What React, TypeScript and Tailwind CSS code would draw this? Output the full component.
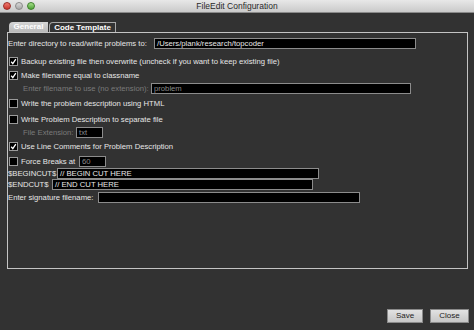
import React from 'react'

const font = { fontFamily: '"Liberation Sans", Arial, sans-serif' }

function CheckBox({ checked }: { checked: boolean }) {
  return (
    <span className="ml-[1px] flex h-[9px] w-[9px] shrink-0 items-center justify-center border border-[#9a9a9a] bg-black">
      {checked && (
        <svg width="7" height="7" viewBox="0 0 7 7" aria-hidden="true">
          <path d="M1.2 3.8 L2.8 5.6 L5.8 1.2" fill="none" stroke="#ffffff" strokeWidth="1.3" />
        </svg>
      )}
    </span>
  )
}

function Field({ value, width, dim }: { value: string; width: string; dim?: boolean }) {
  return (
    <div
      className={`flex h-[11px] shrink-0 items-center whitespace-nowrap border border-[#8c8c8c] bg-black pl-[2px] text-[7.7px] leading-none ${width} ${
        dim ? 'text-[#8a8a8a]' : 'text-[#e8e8e8]'
      }`}
    >
      {value}
    </div>
  )
}

export default function App() {
  return (
    <div className="flex h-[330px] w-[474px] flex-col overflow-hidden whitespace-nowrap bg-[#323232] text-[7.7px] text-[#e6e6e6]" style={font}>
      {/* title bar */}
      <div className="relative flex h-[13px] shrink-0 items-center justify-center border-b border-[#8a8a8a] bg-gradient-to-b from-[#e8e8e8] to-[#cacaca]">
        <div className="absolute left-[3px] top-[2px] flex gap-[4px]">
          <span className="h-[8px] w-[8px] rounded-full border border-[#9a2a24] bg-gradient-to-b from-[#f07a70] to-[#c8322a]" />
          <span className="h-[8px] w-[8px] rounded-full border border-[#8a8a8a] bg-gradient-to-b from-[#d8d8d8] to-[#a8a8a8]" />
          <span className="h-[8px] w-[8px] rounded-full border border-[#3c7f2a] bg-gradient-to-b from-[#a6e08a] to-[#4da234]" />
        </div>
        <span className="text-[8.5px] text-[#2a2a2a]">FileEdit Configuration</span>
      </div>

      {/* tabs */}
      <div className="ml-[9px] mt-[9px] flex h-[10px] shrink-0 items-end gap-[1px]">
        <div className="flex h-[10px] w-[39px] items-center justify-center rounded-tl-[4px] bg-gradient-to-b from-[#d6d6d6] to-[#b8b8b8] text-[8px] font-bold text-white">
          General
        </div>
        <div className="flex h-[10px] w-[67px] items-center justify-center rounded-tl-[4px] border-l border-r border-t border-[#a8a8a8] bg-[#333333] text-[8px] font-bold text-white">
          Code Template
        </div>
      </div>

      {/* panel */}
      <div className="ml-[7px] flex h-[237px] w-[461px] shrink-0 flex-col border border-[#c4c4c4] pt-[5px]">
        <div className="flex h-[11px] items-center">
          <span className="w-[146px] shrink-0">Enter directory to read/write problems to:</span>
          <Field value="/Users/plank/research/topcoder" width="w-[262px]" />
        </div>

        <div className="mt-[7px] flex h-[11px] items-center">
          <CheckBox checked />
          <span className="ml-[3px]">Backup existing file then overwrite (uncheck if you want to keep existing file)</span>
        </div>

        <div className="mt-[3px] flex h-[11px] items-center">
          <CheckBox checked />
          <span className="ml-[3px]">Make filename equal to classname</span>
        </div>

        <div className="mt-[2px] flex h-[11px] items-center pl-[15px]">
          <span className="w-[128px] shrink-0 text-[#7a7a7a]">Enter filename to use (no extension):</span>
          <Field value="problem" width="w-[260px]" dim />
        </div>

        <div className="mt-[4px] flex h-[11px] items-center">
          <CheckBox checked={false} />
          <span className="ml-[3px]">Write the problem description using HTML</span>
        </div>

        <div className="mt-[5px] flex h-[11px] items-center">
          <CheckBox checked={false} />
          <span className="ml-[3px]">Write Problem Description to separate file</span>
        </div>

        <div className="mt-[2px] flex h-[11px] items-center pl-[15px]">
          <span className="w-[53px] shrink-0 text-[#7a7a7a]">File Extension:</span>
          <Field value="txt" width="w-[27px]" dim />
        </div>

        <div className="mt-[3px] flex h-[11px] items-center">
          <CheckBox checked />
          <span className="ml-[3px]">Use Line Comments for Problem Description</span>
        </div>

        <div className="mt-[4px] flex h-[11px] items-center">
          <CheckBox checked={false} />
          <span className="ml-[3px] w-[58px] shrink-0">Force Breaks at</span>
          <Field value="60" width="w-[27px]" dim />
        </div>

        <div className="mt-[1px] flex h-[11px] items-center">
          <span className="w-[49px] shrink-0">$BEGINCUT$</span>
          <Field value="// BEGIN CUT HERE" width="w-[262px]" />
        </div>

        <div className="flex h-[11px] items-center">
          <span className="w-[44px] shrink-0">$ENDCUT$</span>
          <Field value="// END CUT HERE" width="w-[261px]" />
        </div>

        <div className="mt-[2px] flex h-[11px] items-center">
          <span className="w-[90px] shrink-0">Enter signature filename:</span>
          <Field value="" width="w-[262px]" />
        </div>
      </div>

      {/* buttons */}
      <div className="mt-[40px] flex justify-end gap-[7px] pr-[5px]">
        <button className="flex h-[14px] w-[36px] items-center justify-center border border-[#8a8a8a] bg-gradient-to-b from-[#e2e2e2] to-[#c6c6c6] text-[8px] text-[#222222]">
          Save
        </button>
        <button className="flex h-[14px] w-[39px] items-center justify-center border border-[#8a8a8a] bg-gradient-to-b from-[#e2e2e2] to-[#c6c6c6] text-[8px] text-[#222222]">
          Close
        </button>
      </div>
    </div>
  )
}
